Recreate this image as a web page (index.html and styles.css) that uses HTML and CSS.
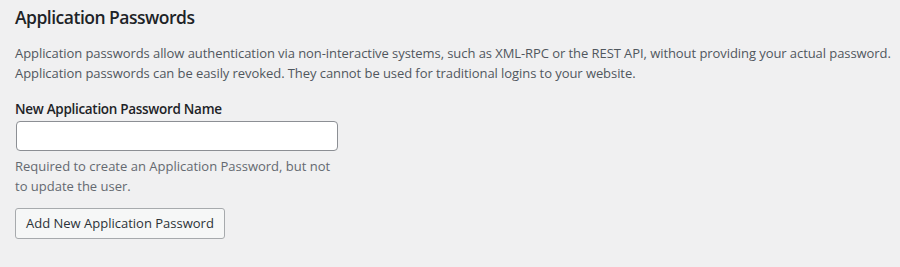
FILE: index.html
```html
<!DOCTYPE html>
<html lang="en">
<head>
<meta charset="utf-8">
<title>Application Passwords</title>
<link rel="stylesheet" href="styles.css">
</head>
<body>
<section class="app-passwords">
  <h2 class="title">Application Passwords</h2>
  <p class="intro">Application passwords allow authentication via non-interactive systems, such as XML-RPC or the REST API, without providing your actual password. Application passwords can be easily revoked. They cannot be used for traditional logins to your website.</p>
  <div class="field">
    <label class="label" for="new_application_password_name">New Application Password Name</label>
    <input class="input" type="text" id="new_application_password_name">
    <p class="help">Required to create an Application Password, but not to update the user.</p>
  </div>
  <button class="button" type="button">Add New Application Password</button>
</section>
</body>
</html>
```

FILE: styles.css
```css
html, body {
  margin: 0;
  padding: 0;
  background: #f0f0f1;
}
body {
  font-family: "Open Sans", "Noto Sans", sans-serif;
  color: #3c434a;
  font-size: 13px;
}
.app-passwords {
  padding: 5px 0 0 15px;
  display: flex;
  flex-direction: column;
  align-items: flex-start;
}
.title {
  margin: 0;
  font-size: 17.5px;
  letter-spacing: -0.5px;
  line-height: 24px;
  font-weight: 600;
  color: #1d2327;
}
.intro {
  margin: 15px 0 0 0;
  font-size: 13px;
  letter-spacing: -0.07px;
  line-height: 19.5px;
  color: #50575e;
}
.field {
  margin-top: 16px;
  display: flex;
  flex-direction: column;
  align-items: flex-start;
}
.label {
  font-size: 13.5px;
  letter-spacing: -0.3px;
  line-height: 21px;
  font-weight: 600;
  color: #1d2327;
}
.input {
  box-sizing: border-box;
  margin: 1px 0 0 1px;
  width: 322px;
  height: 30px;
  border: 1px solid #8c8f94;
  border-radius: 4px;
  background: #fff;
  padding: 0 8px;
  font: inherit;
}
.help {
  margin: 6px 0 0 0;
  width: 325px;
  font-size: 13px;
  line-height: 19.5px;
  color: #646970;
}
.button {
  margin-top: 12px;
  box-sizing: border-box;
  height: 31px;
  padding: 0 10px;
  border: 1px solid #a7aaad;
  border-radius: 3px;
  background: #f6f7f7;
  color: #2c3338;
  font-family: inherit;
  font-size: 13px;
  line-height: 29px;
}
```
